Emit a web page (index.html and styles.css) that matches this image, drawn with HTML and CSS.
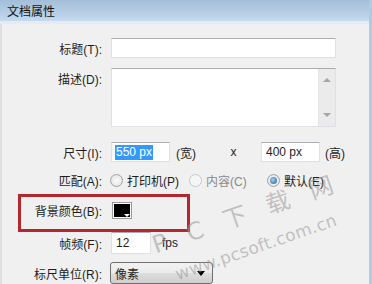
FILE: index.html
```html
<!DOCTYPE html>
<html>
<head>
<meta charset="utf-8">
<link rel="stylesheet" href="styles.css">
</head>
<body>
<div class="window">
  <div class="titlebar">文档属性</div>
  <div class="content">
    <div class="row r-title">
      <label class="label">标题(T):</label>
      <div class="input wide"></div>
    </div>
    <div class="row r-desc">
      <label class="label top">描述(D):</label>
      <div class="textarea">
        <div class="scrollbar">
          <span class="arrow up"></span>
          <span class="arrow down"></span>
        </div>
      </div>
    </div>
    <div class="row r-size">
      <label class="label">尺寸(I):</label>
      <div class="input small"><span class="sel">550 px</span></div>
      <span class="unit">(宽)</span>
      <span class="times">x</span>
      <div class="input small"><span class="val">400 px</span></div>
      <span class="unit u2">(高)</span>
    </div>
    <div class="row r-match">
      <label class="label">匹配(A):</label>
      <div class="ropt o1"><span class="radio"></span><span class="rtext">打印机(P)</span></div>
      <div class="ropt o2"><span class="radio dis"></span><span class="rtext dim">内容(C)</span></div>
      <div class="ropt o3"><span class="radio on"></span><span class="rtext">默认(E)</span></div>
    </div>
    <div class="row r-bg">
      <label class="label">背景颜色(B):</label>
      <div class="swatch"><span class="tri"></span></div>
    </div>
    <div class="row r-fps">
      <label class="label">帧频(F):</label>
      <div class="input fps"><span class="val">12</span></div>
      <span class="fpsu">fps</span>
    </div>
    <div class="row r-unit">
      <label class="label">标尺单位(R):</label>
      <div class="select"><span class="val">像素</span><span class="drop"></span></div>
    </div>
  </div>
  <div class="wm wm1">P C 下 载 网</div>
  <div class="wm wm2">www.pcsoft.com.cn</div>
</div>
</body>
</html>
```
FILE: styles.css
```css
* { box-sizing: border-box; }
html, body { margin: 0; padding: 0; }
body {
  width: 372px;
  height: 284px;
  overflow: hidden;
  background: #f0f0f0;
  font-family: "Liberation Sans", "Noto Sans CJK SC", sans-serif;
  font-size: 12px;
  color: #1e1e1e;
}
.window {
  position: relative;
  width: 372px;
  height: 284px;
  overflow: hidden;
  background: #f0f0f0;
  border-right: 3px solid #aecbe3;
}
.titlebar {
  height: 24px;
  padding-left: 7px;
  line-height: 24px;
  font-size: 12px;
  color: #111;
  background: linear-gradient(#a4bed9, #b9d0e8 70%, #c4daee);
  border-bottom: 3px solid #e4ebf3;
}
.content {
  border-left: 2px solid #dedede;
  height: 260px;
  padding-top: 14px;
  display: flex;
  flex-direction: column;
}
.row {
  display: flex;
  align-items: center;
  position: relative;
}
.label {
  width: 101px;
  text-align: right;
  padding-right: 1px;
  margin-right: 8px;
  white-space: nowrap;
  flex: none;
}
.label.top { align-self: flex-start; padding-top: 2px; }
.input {
  height: 20px;
  background: #fff;
  border: 1px solid #dde1e7;
  border-top-color: #abadb3;
  flex: none;
  display: flex;
  align-items: center;
  padding-left: 4px;
}
.input.wide { width: 225px; }
.r-title { height: 20px; }
.r-desc { margin-top: 10px; height: 59px; }
.textarea {
  width: 225px;
  height: 59px;
  background: #fff;
  border: 1px solid #dde1e7;
  border-top-color: #abadb3;
  position: relative;
  display: flex;
  justify-content: flex-end;
}
.scrollbar {
  width: 17px;
  height: 100%;
  background: #ebebeb;
  border-left: 1px solid #e3e3e3;
  position: relative;
}
.arrow {
  position: absolute;
  left: 4px;
  width: 0; height: 0;
  border-left: 4px solid transparent;
  border-right: 4px solid transparent;
}
.arrow.up { top: 9px; border-bottom: 4px solid #a6a6a6; }
.arrow.down { bottom: 9px; border-top: 4px solid #a6a6a6; }
.r-size { margin-top: 15px; height: 20px; }
.input.small { width: 59px; }
.sel {
  background: #3399ff;
  color: #fff;
  padding: 0 1px;
  line-height: 15px;
  margin-left: -1px;
}
.val { color: #1e1e1e; }
.unit { margin-left: 6px; width: 22px; }
.times { width: 63px; text-align: center; padding-left: 8px; }
.unit.u2 { margin-left: 5px; }
.r-match { margin-top: 10px; height: 16px; }
.ropt { display: flex; align-items: center; flex: none; }
.ropt.o1 { width: 79px; margin-left: -1px; }
.ropt.o2 { width: 78px; }
.radio {
  width: 13px; height: 13px;
  border-radius: 50%;
  border: 1px solid #a2a2a2;
  background: radial-gradient(circle, #fbfbfb 0%, #e4e4e4 80%);
  flex: none;
  position: relative;
}
.radio.dis { border-color: #c8c8c8; background: #f6f6f6; }
.radio.on::after {
  content: "";
  position: absolute;
  left: 2px; top: 2px;
  width: 7px; height: 7px;
  border-radius: 50%;
  background: radial-gradient(circle at 40% 40%, #9fd1f5, #1d5c9a);
}
.rtext { margin-left: 4px; white-space: nowrap; }
.rtext.dim { color: #8a8a8a; }
.r-bg { margin-top: 14px; height: 17px; }
.r-bg::before {
  content: "";
  position: absolute;
  left: 16px;
  top: -8px;
  width: 166px;
  height: 32px;
  border: 3px solid #b3282e;
}
.swatch {
  width: 20px; height: 17px;
  background: #000;
  border: 1px solid #9a9a9a;
  box-shadow: inset 0 0 0 1px #fff;
  position: relative;
  margin-left: 1px;
}
.tri {
  position: absolute;
  right: 1px; bottom: 1px;
  width: 0; height: 0;
  border-left: 3px solid transparent;
  border-right: 3px solid transparent;
  border-top: 3px solid #fff;
}
.r-fps { margin-top: 13px; height: 22px; }
.input.fps { width: 40px; height: 22px; }
.fpsu { margin-left: 11px; }
.r-unit { margin-top: 8px; height: 22px; }
.select {
  width: 103px;
  height: 22px;
  border: 1px solid #707070;
  border-radius: 3px;
  background: linear-gradient(#f2f2f2, #ebebeb 50%, #dddddd 51%, #cfcfcf);
  display: flex;
  align-items: center;
  padding-left: 4px;
  position: relative;
  margin-left: -1px;
}
.drop {
  position: absolute;
  right: 7px; top: 8px;
  width: 0; height: 0;
  border-left: 4px solid transparent;
  border-right: 4px solid transparent;
  border-top: 5px solid #000;
}
.wm {
  position: absolute;
  color: rgba(150, 150, 150, 0.55);
  font-family: "DejaVu Sans", "Noto Sans CJK SC", sans-serif;
  white-space: nowrap;
  transform-origin: left bottom;
  transform: rotate(-19deg);
  pointer-events: none;
}
.wm1 {
  left: 158px;
  top: 225px;
  font-size: 24px;
  letter-spacing: 7px;
}
.wm2 {
  left: 179px;
  top: 264px;
  font-size: 17px;
  letter-spacing: 0.3px;
}
```
